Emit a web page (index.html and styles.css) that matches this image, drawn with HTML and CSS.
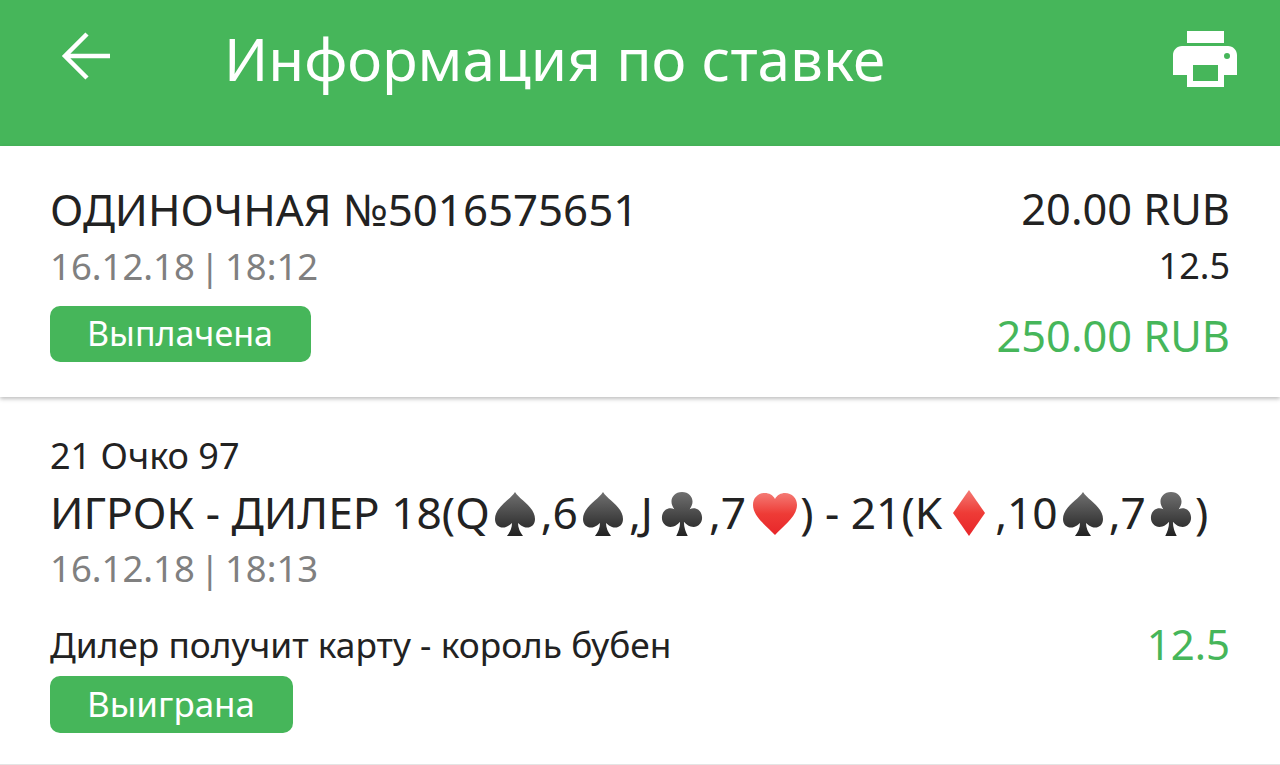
FILE: index.html
```html
<!DOCTYPE html>
<html lang="ru">
  <head>
    <meta charset="UTF-8" />
    <meta name="viewport" content="width=device-width, initial-scale=1.0" />
    <title>Информация по ставке</title>
    <link rel="stylesheet" href="styles.css">
  </head>
  <body>
    <svg class="defs" width="0" height="0">
      <defs>
        <linearGradient id="dark" x1="0" y1="0" x2="0" y2="1">
          <stop offset="0" stop-color="#707070" />
          <stop offset="1" stop-color="#222222" />
        </linearGradient>
        <linearGradient id="red" x1="0" y1="0" x2="0" y2="1">
          <stop offset="0" stop-color="#f47a74" />
          <stop offset="0.5" stop-color="#ee3b36" />
          <stop offset="1" stop-color="#e8262a" />
        </linearGradient>
        <symbol id="spade" viewBox="0 0 40 44">
          <path fill="url(#dark)" d="M20 0C25 8 40 15 40 27C40 34 34 37 29 35C27 34 25 33 23 31C23 36 25 40 28 44H12C15 40 17 36 17 31C15 33 13 34 11 35C6 37 0 34 0 27C0 15 15 8 20 0Z" />
        </symbol>
        <symbol id="club" viewBox="0 0 42 46">
          <path fill="url(#dark)" d="M21 0C28 0 32 5 32 10C32 13 31 15 29 18C36 15 42 20 42 27C42 34 36 38 30 36C27 35 25 33 23 31C23 37 25 42 27 46H15C17 42 19 37 19 31C17 33 15 35 12 36C6 38 0 34 0 27C0 20 6 15 13 18C11 15 10 13 10 10C10 5 14 0 21 0Z" />
        </symbol>
        <symbol id="heart" viewBox="0 0 44 42">
          <path fill="url(#red)" d="M22 42C15 34 0 24 0 12C0 5 5 0 12 0C16 0 20 2 22 6C24 2 28 0 32 0C39 0 44 5 44 12C44 24 29 34 22 42Z" />
        </symbol>
        <symbol id="diamond" viewBox="0 0 32 46">
          <path fill="url(#red)" d="M16 0L32 23L16 46L0 23Z" />
        </symbol>
      </defs>
    </svg>

    <!-- Top bar -->
    <header class="topbar">
      <svg class="back-icon" viewBox="0 0 52 50" width="52" height="50">
        <path d="M50 25H5M27 3L5 25L27 47" fill="none" stroke="#fff" stroke-width="4.500" />
      </svg>
      <h1 class="title">Информация по ставке</h1>
      <svg class="print-icon" viewBox="0 0 64 56" width="64" height="56">
        <path fill="#fff" fill-rule="evenodd" d="M14 0H51V12H14ZM9 15H55C60 15 64 19 64 24V44H51V56H14V44H0V24C0 19 4 15 9 15ZM20 34V50H45V34ZM54 22A3 3 0 1 0 54 28A3 3 0 1 0 54 22Z" />
      </svg>
    </header>

    <!-- Bet summary -->
    <section class="summary">
      <div class="row">
        <div class="big bet-name">ОДИНОЧНАЯ №5016575651</div>
        <div class="big amount">20.00 RUB</div>
      </div>
      <div class="row row-date">
        <div class="date">16.12.18 | 18:12</div>
        <div class="coef">12.5</div>
      </div>
      <div class="row row-status">
        <span class="badge">Выплачена</span>
        <div class="big amount green">250.00 RUB</div>
      </div>
    </section>

    <!-- Event -->
    <section class="event">
      <div class="game game-name">21 Очко 97</div>
      <div class="big score">ИГРОК - ДИЛЕР 18(Q<svg class="suit"><use href="#spade" /></svg>,6<svg class="suit"><use href="#spade" /></svg>,J<svg class="suit suit-club"><use href="#club" /></svg>,7<svg class="suit suit-heart"><use href="#heart" /></svg>) - 21(K<svg class="suit suit-diamond"><use href="#diamond" /></svg>,10<svg class="suit"><use href="#spade" /></svg>,7<svg class="suit suit-club suit-last"><use href="#club" /></svg>)</div>
      <div class="date date-event">16.12.18 | 18:13</div>
      <div class="row row-outcome">
        <div class="game">Дилер получит карту - король бубен</div>
        <div class="big green">12.5</div>
      </div>
      <span class="badge badge-won">Выиграна</span>
    </section>
  </body>
</html>
```

FILE: styles.css
```css
html,
body {
  margin: 0;
  height: 100%;
  overflow: hidden;
}
body {
  font-family: "Noto Sans", sans-serif;
  color: #222;
  background: #fff;
}
.defs {
  display: block;
  height: 0;
}
.topbar {
  display: flex;
  align-items: flex-start;
  height: 146px;
  padding: 0 43px 0 60px;
  box-sizing: border-box;
  background: #46b65a;
  color: #fff;
}
.back-icon {
  margin-top: 31px;
}
.title {
  flex: 1;
  margin: 18px 0 0 112px;
  font-size: 58.5px;
  line-height: 80px;
  font-weight: 400;
}
.print-icon {
  margin-top: 31px;
}
.summary {
  height: 251px;
  padding: 38px 50px 0;
  box-sizing: border-box;
  box-shadow: 0 2px 4px rgba(0, 0, 0, 0.25);
}
.row {
  display: flex;
  justify-content: space-between;
  align-items: center;
}
.big {
  font-size: 42px;
  line-height: 50px;
}
.bet-name {
  font-size: 43.8px;
}
.amount {
  font-size: 43.3px;
}
.green {
  color: #46b65a;
}
.row-status .green {
  margin-top: 4px;
}
.date {
  font-size: 36.5px;
  line-height: 50px;
  color: #808080;
  word-spacing: -4.5px;
}
.coef {
  font-size: 36px;
  line-height: 50px;
}
.row-date {
  margin-top: 7px;
}
.row-status {
  margin-top: 15px;
}
.badge {
  display: inline-block;
  height: 56px;
  padding: 0 38px 0 37px;
  box-sizing: border-box;
  border-radius: 10px;
  background: #46b65a;
  color: #fff;
  font-size: 34px;
  line-height: 55px;
}
.event {
  height: 368px;
  padding: 34px 50px 0;
  box-sizing: border-box;
  border-bottom: 1px solid #e4e4e4;
}
.game {
  font-size: 35.3px;
  line-height: 50px;
}
.game-name {
  font-size: 36px;
}
.score {
  margin-top: 6px;
  font-size: 44.3px;
  white-space: nowrap;
}
.suit {
  width: 40px;
  height: 44px;
  margin: 0 6px 0 5px;
  vertical-align: -7px;
}
.suit-club {
  width: 42px;
  margin-left: 8px;
}
.suit-last {
  margin: 0 3px 0 4px;
}
.suit-heart {
  width: 44px;
  margin: 0 3px 0 7px;
}
.suit-diamond {
  width: 32px;
  height: 46px;
  margin: 0 10px 0 11px;
}
.date-event {
  margin-top: 6px;
}
.row-outcome {
  margin-top: 26px;
}
.badge-won {
  margin-top: 7px;
  height: 57px;
  font-size: 35px;
}
```
